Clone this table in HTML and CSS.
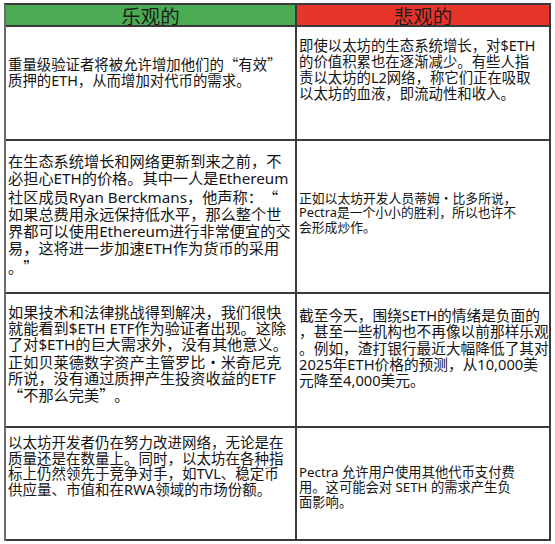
FILE: index.html
```html
<!DOCTYPE html>
<html lang="zh-CN">
<head>
<meta charset="utf-8">
<link rel="stylesheet" href="styles.css">
</head>
<body>
<div class="table">
  <div class="cell head pos">乐观的</div>
  <div class="cell head neg">悲观的</div>

  <div class="cell l1">重量级验证者将被允许增加他们的<span class="qo">“</span>有效<span class="qc">”</span><br>质押的ETH，从而增加对代币的需求。</div>
  <div class="cell r1">即使以太坊的生态系统增长，对$ETH<br>的价值积累也在逐渐减少。有些人指<br>责以太坊的L2网络，称它们正在吸取<br>以太坊的血液，即流动性和收入。</div>

  <div class="cell l2">在生态系统增长和网络更新到来之前，不<br>必担心ETH的价格。其中一人是Ethereum<br>社区成员Ryan Berckmans，他声称：<span class="qo">“</span><br>如果总费用永远保持低水平，那么整个世<br>界都可以使用Ethereum进行非常便宜的交<br>易，这将进一步加速ETH作为货币的采用<br>。<span class="qc">”</span></div>
  <div class="cell r2">正如以太坊开发人员蒂姆<span class="dot">·</span>比多所说，<br>Pectra是一个小小的胜利，所以也许不<br>会形成炒作。</div>

  <div class="cell l3">如果技术和法律挑战得到解决，我们很快<br>就能看到$ETH ETF作为验证者出现。这除<br>了对$ETH的巨大需求外，没有其他意义。<br>正如贝莱德数字资产主管罗比<span class="dot">·</span>米奇尼克<br>所说，没有通过质押产生投资收益的ETF<br><span class="qo">“</span>不那么完美<span class="qc">”</span>。</div>
  <div class="cell r3">截至今天，围绕SETH的情绪是负面的<br>，甚至一些机构也不再像以前那样乐观<br>。例如，渣打银行最近大幅降低了其对<br>2025年ETH价格的预测，从10,000美<br>元降至4,000美元。</div>

  <div class="cell l4">以太坊开发者仍在努力改进网络，无论是在<br>质量还是在数量上。同时，以太坊在各种指<br>标上仍然领先于竞争对手，如TVL、稳定币<br>供应量、市值和在RWA领域的市场份额。</div>
  <div class="cell r4">Pectra 允许用户使用其他代币支付费<br>用。这可能会对 SETH 的需求产生负<br>面影响。</div>
</div>
</body>
</html>
```

FILE: styles.css
```css
html, body {
  margin: 0;
  padding: 0;
  background: #ffffff;
}

body {
  font-family: "Noto Sans", "Noto Sans CJK SC", sans-serif;
  color: #141414;
}

.table {
  display: grid;
  grid-template-columns: 291px 254px;
  grid-template-rows: 22px 114px 153px 134px 113px;
  width: max-content;
  margin: 3px 0 0 4px;
  border-left: 2px solid #6a6a6a;
  border-top: 2px solid #3a3a3a;
}

.cell {
  box-sizing: border-box;
  border-right: 2px solid #3a3a3a;
  border-bottom: 2px solid #3a3a3a;
  white-space: nowrap;
  overflow: visible;
  padding-left: 2px;
}

.head {
  font-size: 19.5px;
  line-height: 22px;
  padding-top: 1px;
  text-align: center;
  color: #1c1c1c;
  padding-left: 0;
}

.pos { background: #4aab52; }
.neg { background: #e8352b; }

.qo, .qc, .dot {
  display: inline-block;
  width: 1em;
  font-family: "Noto Sans CJK SC", sans-serif;
}
.qo { text-align: right; }
.qc { text-align: left; }
.dot { text-align: center; }

.l1 { font-size: 14.4px; line-height: 16.7px; padding-top: 28.5px; }
.r1 { font-size: 14.4px; line-height: 16px; padding-top: 10.5px; }
.l2 { font-size: 15.2px; line-height: 17.3px; padding-top: 12px; }
.r2 { font-size: 12.8px; line-height: 14.4px; padding-top: 50px; }
.l3 { font-size: 15.2px; line-height: 16.2px; padding-top: 10px; }
.r3 { font-size: 14.7px; line-height: 16.25px; padding-top: 13px; }
.l4 { font-size: 14.5px; line-height: 15.5px; padding-top: 7px; }
.r4 { font-size: 13.3px; line-height: 15px; padding-top: 37px; }
```
